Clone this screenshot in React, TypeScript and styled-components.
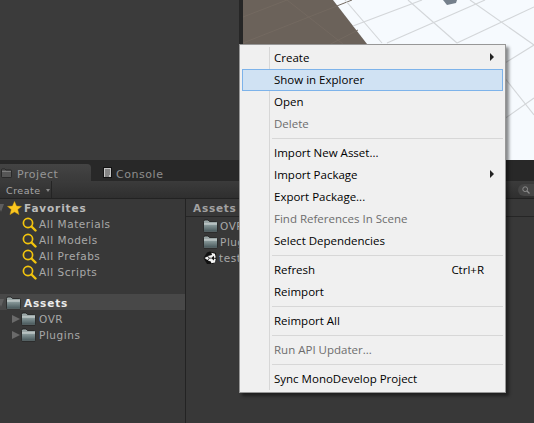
import React from "react";
import styled, { createGlobalStyle } from "styled-components";

const Global = createGlobalStyle`
  html, body { margin: 0; padding: 0; background: #383838; }
  * { box-sizing: border-box; }
`;

const Page = styled.div`
  width: 534px;
  height: 423px;
  overflow: hidden;
  position: relative;
  display: flex;
  flex-direction: column;
  background: #383838;
  font-family: "DejaVu Sans", sans-serif;
  font-size: 10.5px;
  letter-spacing: 0.55px;
  color: #b0b0b0;
`;
const TopArea = styled.div`
  height: 160px;
  display: flex;
  flex: none;
`;
const Hierarchy = styled.div`
  background: #3b3b3b;
  border-right: 4px solid #262626;
  flex: none;
  width: 243px;
`;
const Scene = styled.svg`
  display: block;
  flex: 1;
  height: 160px;
`;
const TabBar = styled.div`
  height: 21px;
  background: #282828;
  display: flex;
  align-items: flex-end;
  flex: none;
`;
const Tab = styled.div<{ $active?: boolean }>`
  height: 17px;
  width: ${(p) => (p.$active ? "91px" : "auto")};
  margin-left: ${(p) => (p.$active ? "0" : "12px")};
  padding-left: ${(p) => (p.$active ? "1px" : "0")};
  padding-top: 4px;
  display: flex;
  align-items: center;
  gap: ${(p) => (p.$active ? "5px" : "4px")};
  background: ${(p) => (p.$active ? "linear-gradient(#444444, #3a3a3a)" : "transparent")};
  border-top-right-radius: 4px;
  color: ${(p) => (p.$active ? "#969696" : "#8e8e8e")};
  font-size: 11px;
  letter-spacing: 0.55px;
`;
const TabIcon = styled.span`
  display: block;
  line-height: 0;
  margin-top: -4px;
  opacity: 0.95;
`;
const Toolbar = styled.div`
  height: 18px;
  background: linear-gradient(#3b3b3b, #2f2f2f);
  border-bottom: 1px solid #222;
  display: flex;
  justify-content: space-between;
  flex: none;
`;
const CreateButton = styled.div`
  width: 52px;
  padding: 2px 0 0 6px;
  border-right: 1px solid #242424;
  display: flex;
  align-items: center;
  gap: 5px;
  font-size: 9.5px;
  letter-spacing: 0.5px;
  color: #a8a8a8;
`;
const Caret = styled.i`
  display: block;
  width: 0;
  height: 0;
  border-left: 2.5px solid transparent;
  border-right: 2.5px solid transparent;
  border-top: 3px solid #8a8a8a;
`;
const SearchPill = styled.div`
  width: 16px;
  height: 12px;
  margin-top: 3px;
  background: #454545;
  border-radius: 6px 0 0 6px;
  padding: 2px 0 0 4px;
  line-height: 0;
`;
const Body = styled.div`
  flex: 1;
  display: flex;
  min-height: 0;
`;
const Sidebar = styled.div`
  width: 186px;
  border-right: 1px solid #232323;
  padding-top: 1px;
  flex: none;
`;
const TreeRow = styled.div<{ $indent: number; $selected?: boolean; $bold?: boolean; $bright?: boolean }>`
  height: 16px;
  display: flex;
  align-items: center;
  padding-left: ${(p) => p.$indent}px;
  padding-top: ${(p) => (p.$selected ? "2px" : "0")};
  margin-bottom: ${(p) => (p.$selected ? "1px" : "0")};
  background: ${(p) => (p.$selected ? "#484848" : "transparent")};
  font-weight: ${(p) => (p.$bold ? 700 : 400)};
  color: ${(p) => (p.$bright ? "#ececec" : p.$bold ? "#bcbcbc" : "#a8a8a8")};
  letter-spacing: ${(p) => (p.$bold ? "0.85px" : "0.55px")};
`;
const Spacer = styled.div`
  height: 14px;
`;
const OpenArrow = styled.i<{ $gap: number }>`
  display: block;
  flex: none;
  width: 0;
  height: 0;
  border-left: 3.5px solid transparent;
  border-right: 3.5px solid transparent;
  border-top: 8px solid #5e5e5e;
  margin: 0 ${(p) => p.$gap}px 0 -2px;
`;
const ClosedArrow = styled.i`
  display: block;
  flex: none;
  width: 0;
  height: 0;
  border-top: 4.5px solid transparent;
  border-bottom: 4.5px solid transparent;
  border-left: 8px solid #6a6a6a;
  margin-right: 1px;
`;
const RowIcon = styled.span<{ $mr: number }>`
  display: block;
  line-height: 0;
  margin-right: ${(p) => p.$mr}px;
  flex: none;
`;
const Main = styled.div`
  flex: 1;
`;
const Breadcrumb = styled.div`
  height: 18px;
  border-bottom: 1px solid #262626;
  padding-left: 7px;
  display: flex;
  align-items: center;
  font-weight: 700;
  color: #a2a2a2;
  letter-spacing: 0.75px;
`;
const AssetList = styled.div`
  padding-top: 1px;
`;
const AssetRow = styled.div`
  height: 16px;
  display: flex;
  align-items: center;
  padding-left: 17px;
  color: #a8a8a8;
`;
const Menu = styled.div`
  position: absolute;
  left: 239px;
  top: 44px;
  width: 267px;
  height: 349px;
  padding: 2px;
  background: #f0f0f0;
  border: 1px solid #979797;
  box-shadow: 3px 3px 3px rgba(0, 0, 0, 0.45);
  font-family: "Open Sans", sans-serif;
  font-size: 11.5px;
  letter-spacing: 0;
  color: #000;
`;
const Gutter = styled.div`
  position: absolute;
  left: 29px;
  top: 2px;
  bottom: 2px;
  width: 1px;
  background: #d7d7d7;
`;
const Item = styled.div<{ $hover?: boolean; $disabled?: boolean }>`
  position: relative;
  height: 22px;
  padding: 0 19px 2px 32px;
  display: flex;
  align-items: center;
  justify-content: space-between;
  color: ${(p) => (p.$disabled ? "#6d6d6d" : "#000")};
  ${(p) => (p.$hover ? "background:#d0e2f3;outline:1px solid #7db3ea;outline-offset:-1px;" : "")}
`;
const SubArrow = styled.i`
  display: block;
  width: 0;
  height: 0;
  margin-right: -10px;
  border-top: 4px solid transparent;
  border-bottom: 4px solid transparent;
  border-left: 4px solid #222;
`;
const Separator = styled.div`
  position: relative;
  height: 7px;
  padding: 3px 0 3px 30px;
  &::after {
    content: "";
    display: block;
    height: 1px;
    background: #d7d7d7;
  }
`;

const Folder = () => (
  <svg width="15" height="14" viewBox="0 0 15 14">
    <defs>
      <linearGradient id="folderBody" x1="0" y1="0" x2="0" y2="1">
        <stop offset="0" stopColor="#8b9c9d" />
        <stop offset="1" stopColor="#47575a" />
      </linearGradient>
    </defs>
    <path d="M.5 2.5 Q.5 1 2 1 H5 L6.5 2.5 H13.5 Q14.5 2.5 14.5 3.5 V12 Q14.5 13 13.5 13 H1.5 Q.5 13 .5 12Z" fill="#9aa6a6" stroke="#1c1c1c" strokeWidth=".8" />
    <path d="M1 4.6 H14 V5.6 H1Z" fill="#e6ebeb" />
    <path d="M1 5.6 H14 V12.6 H1Z" fill="url(#folderBody)" />
  </svg>
);
const TabFolder = () => (
  <svg width="11" height="10" viewBox="0 0 11 10">
    <path d="M.5 2 Q.5 1 1.5 1 H4 L5 2 H9.5 Q10.5 2 10.5 3 V8.5 Q10.5 9.5 9.5 9.5 H1.5 Q.5 9.5 .5 8.5Z" fill="#585858" stroke="#1f1f1f" strokeWidth=".8" />
    <path d="M1 3.5 H10" stroke="#8a8a8a" strokeWidth=".8" />
  </svg>
);
const Search = () => (
  <svg width="15" height="15" viewBox="0 0 15 15" fill="none" stroke="#f2c40e">
    <circle cx="6" cy="6" r="4.6" strokeWidth="1.7" />
    <path d="M9.5 9.5 L13.5 13.5" strokeWidth="2.4" strokeLinecap="round" />
  </svg>
);
const Star = () => (
  <svg width="15" height="14" viewBox="0 0 15 14">
    <path d="M7.5 .3 L9.6 5 L14.7 5.3 L10.8 8.6 L12.1 13.7 L7.5 11 L2.9 13.7 L4.2 8.6 L.3 5.3 L5.4 5Z" fill="#fbc71f" stroke="#b88a10" strokeWidth=".4" />
  </svg>
);
const Unity = () => (
  <svg width="14" height="14" viewBox="0 0 14 14">
    <path d="M7 .5 L13 2 L13.5 9 L10 13 L4 13 L.5 7 L4 1.5Z" fill="#111" />
    <path d="M8.4 1.8 L11.9 2.8 L12.8 6.4 L11.3 7 L10.6 4.8 L8.8 6.8 H6.5 L4.9 5.1 L9 3.9Z M4.4 5.6 L6 7.2 L4.4 8.9 L1.5 7Z M6.5 7.6 H8.8 L10.6 9.4 L11.3 7.4 L12.8 7.9 L11.9 11.5 L8.4 12.3 L7.8 10.6 L4.9 9.4Z" fill="#f4f4f4" />
  </svg>
);
const Doc = () => (
  <svg width="9" height="11" viewBox="0 0 9 11">
    <rect x=".5" y=".5" width="8" height="10" fill="#cfcfcf" stroke="#111" />
    <path d="M2 3 H7 M2 5 H7 M2 7 H7 M2 9 H6" stroke="#444" />
  </svg>
);
const MiniLens = () => (
  <svg width="8" height="8" viewBox="0 0 8 8" fill="none" stroke="#8c8c8c">
    <circle cx="3.2" cy="3.2" r="2.4" />
    <path d="M5 5 L7.5 7.5" strokeWidth="1.3" />
  </svg>
);

const Grid = () => (
  <Scene viewBox="243 0 291 160" preserveAspectRatio="none">
    <rect x="243" y="0" width="291" height="160" fill="#f6fafe" />
    <path d="M333 0 L367 44 L367 160 H243 V0Z" fill="#6b625a" />
    <g stroke="#736960" strokeWidth="1" fill="none">
      <path d="M243 17 L287 0" />
      <path d="M243 43 L352 0" />
      <path d="M287 0 L343 44" />
      <path d="M280 70 L358 30" />
    </g>
    <g stroke="#d3d6d9" strokeWidth="1.1" fill="none">
      <path d="M345 0 L382 43" />
      <path d="M408 0 L457 43" />
      <path d="M353 26 L422 0" />
      <path d="M387 43 L485 0" />
      <path d="M457 43 L534 7" />
      <path d="M470 0 L534 45" />
      <path d="M500 66 L534 45" />
      <path d="M500 72 L534 115" />
      <path d="M500 122 L534 98" />
    </g>
    <path d="M443 0 H457 L456 3 L447 5Z" fill="#75808c" />
  </Scene>
);

const tree = ["All Materials", "All Models", "All Prefabs", "All Scripts"];

export default function App() {
  return (
    <Page>
      <Global />
      <TopArea>
        <Hierarchy />
        <Grid />
      </TopArea>
      <TabBar>
        <Tab $active>
          <TabIcon>
            <TabFolder />
          </TabIcon>
          Project
        </Tab>
        <Tab>
          <TabIcon>
            <Doc />
          </TabIcon>
          Console
        </Tab>
      </TabBar>
      <Toolbar>
        <CreateButton>
          Create
          <Caret />
        </CreateButton>
        <SearchPill>
          <MiniLens />
        </SearchPill>
      </Toolbar>
      <Body>
        <Sidebar>
          <TreeRow $indent={0} $bold>
            <OpenArrow $gap={3} />
            <RowIcon $mr={2}>
              <Star />
            </RowIcon>
            Favorites
          </TreeRow>
          {tree.map((t) => (
            <TreeRow key={t} $indent={22}>
              <RowIcon $mr={2}>
                <Search />
              </RowIcon>
              {t}
            </TreeRow>
          ))}
          <Spacer />
          <TreeRow $indent={0} $selected $bold $bright>
            <OpenArrow $gap={2} />
            <RowIcon $mr={3}>
              <Folder />
            </RowIcon>
            Assets
          </TreeRow>
          {["OVR", "Plugins"].map((t) => (
            <TreeRow key={t} $indent={12}>
              <ClosedArrow />
              <RowIcon $mr={3}>
                <Folder />
              </RowIcon>
              {t}
            </TreeRow>
          ))}
        </Sidebar>
        <Main>
          <Breadcrumb>Assets</Breadcrumb>
          <AssetList>
            <AssetRow>
              <RowIcon $mr={2}>
                <Folder />
              </RowIcon>
              OVR
            </AssetRow>
            <AssetRow>
              <RowIcon $mr={2}>
                <Folder />
              </RowIcon>
              Plugins
            </AssetRow>
            <AssetRow>
              <RowIcon $mr={2}>
                <Unity />
              </RowIcon>
              test
            </AssetRow>
          </AssetList>
        </Main>
      </Body>
      <Menu>
        <Gutter />
        <Item>
          Create
          <SubArrow />
        </Item>
        <Item $hover>Show in Explorer</Item>
        <Item>Open</Item>
        <Item $disabled>Delete</Item>
        <Separator />
        <Item>Import New Asset...</Item>
        <Item>
          Import Package
          <SubArrow />
        </Item>
        <Item>Export Package...</Item>
        <Item $disabled>Find References In Scene</Item>
        <Item>Select Dependencies</Item>
        <Separator />
        <Item>
          Refresh
          <span>Ctrl+R</span>
        </Item>
        <Item>Reimport</Item>
        <Separator />
        <Item>Reimport All</Item>
        <Separator />
        <Item $disabled>Run API Updater...</Item>
        <Separator />
        <Item>Sync MonoDevelop Project</Item>
      </Menu>
    </Page>
  );
}
